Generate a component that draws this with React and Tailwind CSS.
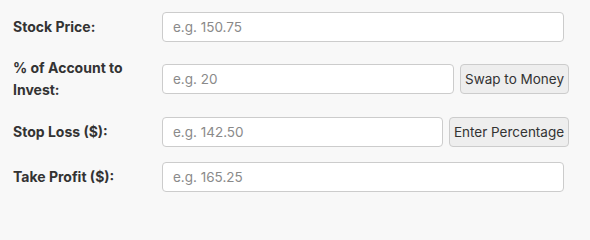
import React, { useState } from 'react';

const font = { fontFamily: 'Inter, "Noto Sans", sans-serif' };

const Field = ({ label, placeholder, button, buttonWidth }) => (
  <div className="flex items-center">
    <label className="w-[149px] shrink-0 pr-3 text-[14px] font-bold leading-[22.4px] text-[#333333]">
      {label}
    </label>
    <div className="flex w-[407px] items-center gap-[6px]">
      <input
        type="text"
        placeholder={placeholder}
        className={`h-[30px] min-w-0 rounded-[4px] border border-[#cccccc] bg-white px-[10px] text-[13.5px] text-[#333333] placeholder-[#8a8a8a] outline-none ${
          button ? 'flex-1' : 'w-[402px]'
        }`}
      />
      {button && (
        <button
          type="button"
          className={`h-[30px] shrink-0 rounded-[4px] border border-[#cccccc] bg-[#eeeeee] text-[13.5px] text-[#333333] ${buttonWidth}`}
        >
          {button}
        </button>
      )}
    </div>
  </div>
);

export default function App() {
  const [mode] = useState('percent');

  return (
    <div className="min-h-screen w-full bg-[#f8f8f8] px-[13px] pt-3" style={font}>
      <div className="flex flex-col gap-[15px]">
        <Field label="Stock Price:" placeholder="e.g. 150.75" />
        <Field
          label={mode === 'percent' ? '% of Account to Invest:' : 'Amount to Invest ($):'}
          placeholder="e.g. 20"
          button="Swap to Money"
          buttonWidth="w-[109px]"
        />
        <Field
          label="Stop Loss ($):"
          placeholder="e.g. 142.50"
          button="Enter Percentage"
          buttonWidth="w-[120px]"
        />
        <Field label="Take Profit ($):" placeholder="e.g. 165.25" />
      </div>
    </div>
  );
}
